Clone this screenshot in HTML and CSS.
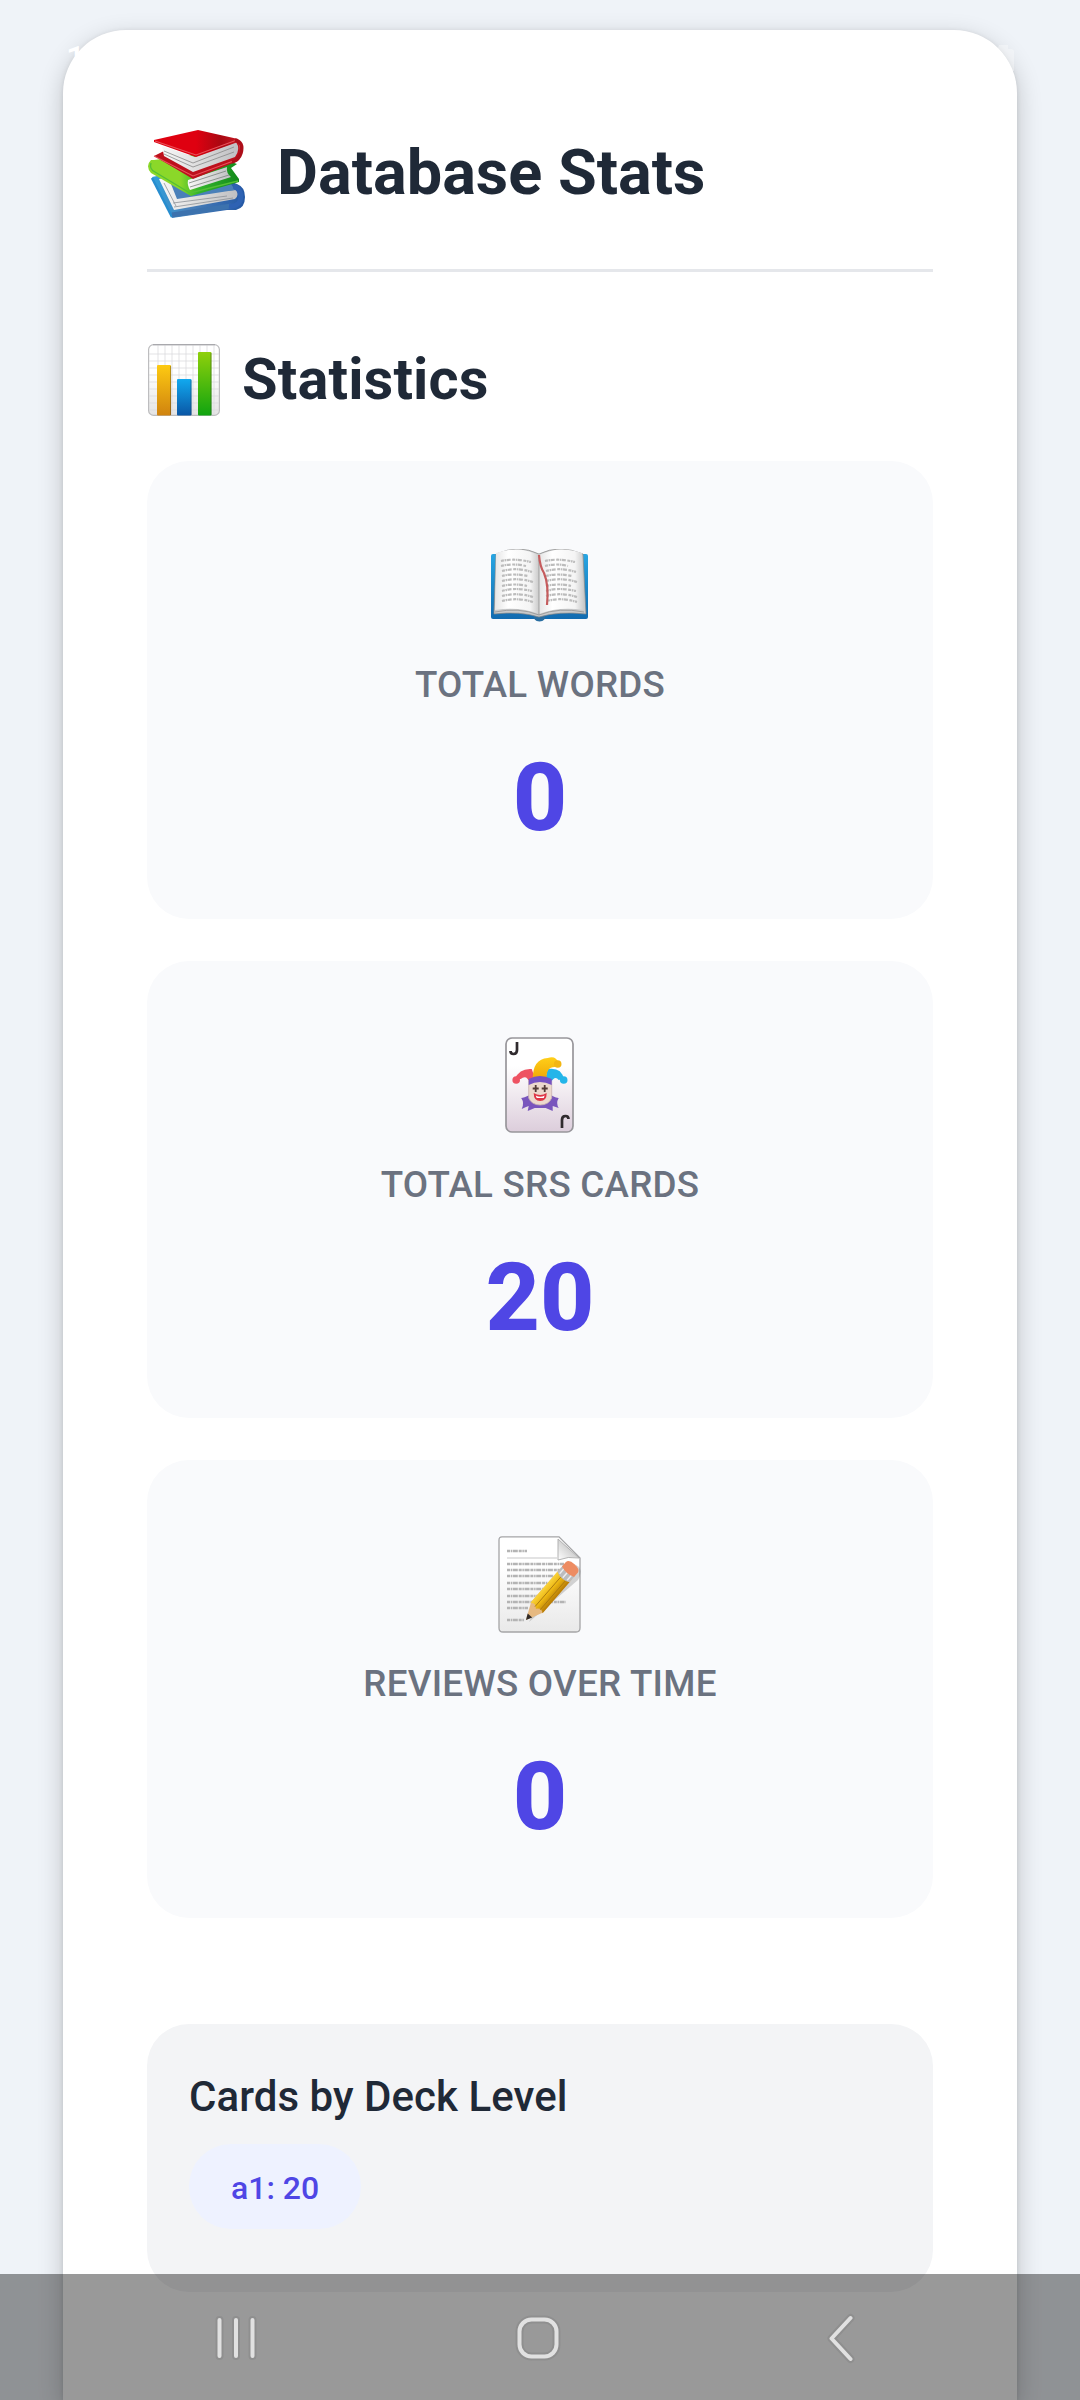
FILE: index.html
```html
<!DOCTYPE html>
<html lang="en">
<head>
<meta charset="utf-8">
<title>Database Stats</title>
<link rel="stylesheet" href="styles.css">
</head>
<body>
<main class="sheet">
  <header class="header">
    <svg class="icon-books" viewBox="0 0 99 88" aria-hidden="true">
      <defs>
        <linearGradient id="red" x1="0" x2="1"><stop offset=".5" stop-color="#df0010"/><stop offset=".8" stop-color="#a90812"/><stop offset="1" stop-color="#c61722"/></linearGradient>
        <linearGradient id="green" x1="0" x2="1"><stop offset=".35" stop-color="#8bd829"/><stop offset=".55" stop-color="#35b62c"/><stop offset="1" stop-color="#128a1b"/></linearGradient>
        <linearGradient id="blue" x1="0" x2="1"><stop offset="0" stop-color="#2fa0dc"/><stop offset=".4" stop-color="#4a80b9"/><stop offset="1" stop-color="#2458a5"/></linearGradient>
        <linearGradient id="pages" x1="0" x2="1"><stop offset="0" stop-color="#f8f8f8"/><stop offset=".5" stop-color="#dcdcdc"/><stop offset="1" stop-color="#bfbfc2"/></linearGradient>
      </defs>
      <path d="M5 47 50 38 90 54Q98 57 98 67 98 78 89 80L80 80 25 88Z" fill="url(#blue)"/>
      <path d="M12 49 30 46 42 64 89 60Q93 64 88 69L27 80Z" fill="url(#pages)"/>
      <path d="M22 49 30 69 88 60 84 54 55 47Z" fill="#4a80b9"/>
      <path d="M27 77 86 68M26 73 80 66M17 53 29 76" fill="none" stroke="#8c9097" stroke-width=".8"/>
      <path d="M5 48 25 87" fill="none" stroke="#278dcf" stroke-width="2.5"/>
      <path d="M25 85 84 76" fill="none" stroke="#3c72ae" stroke-width="5"/>
      <path d="M87 56Q96 61 93 71 90 77 82 76" fill="none" stroke="#2e62b3" stroke-width="5"/>
      <path d="M7 30 60 23 90 34 84 38 92 49V52L44 66 4 43Q-2 36 4 30Z" fill="url(#green)"/>
      <path d="M41 50 80 37Q79 43 84 47L43 60Q40 55 41 50Z" fill="url(#pages)"/>
      <path d="M42 53 79 41M43 57 82 45" stroke="#77807a" stroke-width=".8"/>
      <path d="M4 33Q2 39 8 42L43 63 91 51" fill="none" stroke="#54bf35" stroke-width="1.3"/>
      <path d="M7 26 19 20 48 30 91 10Q97 17 91 31L46 49Z" fill="#bd101c"/>
      <path d="M15 16 48 27 89 12Q94 19 88 27L46 42 17 26Z" fill="url(#pages)"/>
      <path d="M17 21 46 33 87 17M17 24 46 37 87 22" fill="none" stroke="#888" stroke-width=".8"/>
      <path d="M7 10 51 0 91 9 91 12 49 27 7 12Z" fill="url(#red)"/>
      <path d="M8 11 49 25 90 10M7 26 46 46 89 30Q96 24 92 13" fill="none" stroke="#e8535b" stroke-width="1.1"/>
      <path d="M88 10Q97 12 94 23 92 30 85 32" fill="none" stroke="#ad0e19" stroke-width="3.5"/>
    </svg>
    <h1 class="title">Database Stats</h1>
  </header>

  <div class="section-head">
    <svg class="icon-chart" viewBox="0 0 72 72" aria-hidden="true">
      <defs>
        <linearGradient id="paper" x1="0" y1="0" x2="0" y2="1"><stop offset=".4" stop-color="#fff"/><stop offset="1" stop-color="#e4e4e4"/></linearGradient>
        <linearGradient id="bar1" x1="0" y1="0" x2="0" y2="1"><stop stop-color="#fdca12"/><stop offset="1" stop-color="#d0830f"/></linearGradient>
        <linearGradient id="bar2" x1="0" y1="0" x2="0" y2="1"><stop stop-color="#11a9ef"/><stop offset="1" stop-color="#0a56a5"/></linearGradient>
        <linearGradient id="bar3" x1="0" y1="0" x2="0" y2="1"><stop stop-color="#8fd00b"/><stop offset="1" stop-color="#10a410"/></linearGradient>
      </defs>
      <rect x=".6" y=".6" width="70.8" height="70.8" rx="5" fill="url(#paper)" stroke="#bdbdbf" stroke-width="1.2"/>
      <path d="M10 1V71M17 1V71M24 1V71M31 1V71M38 1V71M45 1V71M52 1V71M59 1V71M66 1V71M1 10H71M1 17H71M1 24H71M1 31H71M1 38H71M1 45H71M1 52H71M1 59H71M1 66H71" stroke="#dcdcde" stroke-width=".8"/>
      <path d="M5 .7H67" stroke="#a9a9ad" stroke-width="1.2"/>
      <rect x="9" y="21" width="14" height="50.5" rx="1" fill="url(#bar1)"/>
      <rect x="29" y="35" width="14.5" height="36.5" rx="1" fill="url(#bar2)"/>
      <rect x="50" y="8" width="13.5" height="63.5" rx="1" fill="url(#bar3)"/>
      <path d="M22.6 22V71M43 36V71M63 9V71" stroke="#222" stroke-opacity=".35"/>
    </svg>
    <h2 class="section-title">Statistics</h2>
  </div>

  <section class="stats">
    <article class="stat">
      <div class="stat-icon">
        <svg width="97" height="73" viewBox="0 0 97 73" aria-hidden="true">
          <defs>
            <linearGradient id="cover" x1="0" y1="0" x2="0" y2="1"><stop stop-color="#27a5e2"/><stop offset="1" stop-color="#126bb0"/></linearGradient>
            <linearGradient id="leaf" x1="0" x2="1"><stop stop-color="#e5e5e5"/><stop offset=".3" stop-color="#fff"/><stop offset=".8" stop-color="#f4f4f4"/><stop offset="1" stop-color="#cacaca"/></linearGradient>
          </defs>
          <rect y="5" width="97" height="65" rx="2" fill="url(#cover)"/>
          <path d="M43 66H54Q55 72 48.5 72.5 42 72 43 66Z" fill="#286da1"/>
          <path d="M3 63 5 5Q28-5 48 5 68-5 92 5L95 65Q68 62 48 68 29 62 3 65Z" fill="#c8c9ca" stroke="#888" stroke-width=".7"/>
          <path d="M5 4Q28-4 48 6V65Q28 57 4 61Z" fill="url(#leaf)"/>
          <path d="M48 6Q68-4 91 4L93 61Q68 57 48 65Z" fill="url(#leaf)"/>
          <path d="M48 6V66M4 63Q28 58 48 66 68 58 93 63" fill="none" stroke="#999" stroke-width=".9"/>
          <g fill="none" stroke="#bcbcbc" stroke-width="2.2" stroke-dasharray="3 .7 1.5 .6 4 1.5">
            <path d="M10 12Q24 9 40 13M10 17Q22 14 35 17M11 22Q26 18 41 23M11 27Q22 24 37 27M11 32Q26 28 42 33M11 37Q24 34 36 37M11 42Q24 38 41 42M11 47Q26 43 42 48M11 52Q26 48 42 53"/>
            <path d="M54 12Q68 9 84 13M54 17Q66 14 77 17M55 22Q70 18 85 23M55 27Q66 24 81 27M55 32Q70 28 86 33M55 37Q68 34 80 37M55 42Q68 38 85 42M55 47Q70 43 86 48M56 52Q70 48 86 53"/>
          </g>
          <path d="M48 6Q49 18 53 24 58 36 56 56" fill="none" stroke="#c55c5d" stroke-width="2.2"/>
        </svg>
      </div>
      <div class="stat-label">TOTAL WORDS</div>
      <div class="stat-value">0</div>
    </article>

    <article class="stat">
      <div class="stat-icon">
        <svg width="69" height="96" viewBox="0 0 69 96" aria-hidden="true">
          <defs>
            <linearGradient id="card" x1="0" y1="0" x2="0" y2="1"><stop offset=".3" stop-color="#fff"/><stop offset="1" stop-color="#dccddb"/></linearGradient>
            <linearGradient id="gold" x1="0" y1="0" x2="0" y2="1"><stop stop-color="#ffcf19"/><stop offset="1" stop-color="#f0a806"/></linearGradient>
          </defs>
          <rect x="1" y="1" width="67" height="94" rx="6" fill="url(#card)" stroke="#98969b" stroke-width="1.7"/>
          <path d="M12 5V13Q12 17 8.5 17 5.5 17 5.5 14M57 91V83Q57 79 60.5 79 63.5 79 63.5 82" fill="none" stroke="#302b2e" stroke-width="2.7"/>
          <g transform="translate(.7 0)">
            <path d="M24 58Q18 61 15.5 61 19 66 16 72 20 70 23 69L22 74 29 71H40L47 74V69Q50 70 53 71 50 66 53 61 50 61 45 58Z" fill="#7955bd"/>
            <path d="M26 32Q14 31 9 42L15 42Q21 37 24 46H31Z" fill="#ee5262"/>
            <path d="M42 32Q56 30 58 42L53 43Q49 38 45 46L39 44Z" fill="#24b5e9"/>
            <path d="M27 42Q27 22 42 21 50 18 53 26L49 30Q40 30 41 42Z" fill="url(#gold)"/>
            <circle cx="10.5" cy="43" r="3.8" fill="#ee5262"/><circle cx="52" cy="27" r="3.8" fill="#f3b613"/><circle cx="58" cy="43" r="3.8" fill="#24b5e9"/>
            <path d="M23 44Q34 37 46 44V61Q43 68 34.5 68 26 68 23 61Z" fill="#ecd8cd" stroke="#c9b2b0" stroke-width=".8"/>
            <path d="M23 48V42Q34 36 46 42V48Q34 42 23 48Z" fill="#7652c2"/>
            <path d="M30 48V55M27 51.5H33M39 48V55M36 51.5H42" stroke="#523a36" stroke-width="1.8"/>
            <path d="M28 56Q34.5 60 41 56 41 64 34.5 64 28 64 28 56Z" fill="#df3545"/>
            <path d="M30 58.5Q34.5 61 39 58.5L38 61H31Z" fill="#fff"/>
          </g>
        </svg>
      </div>
      <div class="stat-label">TOTAL SRS CARDS</div>
      <div class="stat-value">20</div>
    </article>

    <article class="stat">
      <div class="stat-icon">
        <svg width="83" height="97" viewBox="0 0 83 97" aria-hidden="true">
          <defs>
            <linearGradient id="sheet" x1="0" y1="0" x2="0" y2="1"><stop offset=".3" stop-color="#fff"/><stop offset="1" stop-color="#e9e9e9"/></linearGradient>
            <linearGradient id="fold" x1="0" y1="1" x2="1" y2="0"><stop stop-color="#fff"/><stop offset="1" stop-color="#aaa"/></linearGradient>
            <linearGradient id="pencil" x1="0" y1="0" x2="1" y2="0"><stop stop-color="#f9d33c"/><stop offset=".45" stop-color="#edb712"/><stop offset="1" stop-color="#b67b05"/></linearGradient>
          </defs>
          <path d="M4 .8H61L82 22V92Q82 96 78 96H5Q1 96 1 92V4Q1 .8 4 .8Z" fill="url(#sheet)" stroke="#a5a5a7" stroke-width="1.3"/>
          <path d="M9 22H59" stroke="#c7c7c8"/>
          <g fill="none" stroke="#b4b4b4" stroke-width="2.6" stroke-dasharray="3 .7 1.5 .6 5 .9">
            <path d="M9 15H29M9 28H66M9 34H62M9 40H56M9 47H50M9 53H46M9 60H40M9 66H68M9 72H30M9 84H26"/>
          </g>
          <path d="M60 3 60 24Q70 20 81 22Z" fill="url(#fold)" stroke="#aaa" stroke-width=".9"/>
          <path d="M31 86 80 44Q86 33 78 29L35 78Z" fill="#333" opacity=".2"/>
          <g transform="translate(28 84) rotate(41)">
            <path d="M0 0-8-17V-61H8V-17Z" fill="#e6b981"/>
            <path d="M-8-16V-57H8V-16Q4-20 0-15-4-20-8-16Z" fill="url(#pencil)"/>
            <path d="M-2-16V-56M4-17V-56" stroke="#a97810" stroke-width=".9"/>
            <path d="M0 0-3-6H3Z" fill="#322b27"/>
            <path d="M-8-57V-66H8V-57Q0-53-8-57Z" fill="#bbbcbe"/>
            <path d="M-5-57V-65M0-56V-65M5-57V-65" stroke="#eee" stroke-width="1.4"/>
            <path d="M-8-64V-70Q-7-74 0-74 7-74 8-70V-64Q0-61-8-64Z" fill="#ed8c62"/>
          </g>
        </svg>
      </div>
      <div class="stat-label">REVIEWS OVER TIME</div>
      <div class="stat-value">0</div>
    </article>
  </section>

  <section class="decks">
    <h3 class="decks-title">Cards by Deck Level</h3>
    <span class="chip">a1: 20</span>
  </section>
</main>

<div class="status-bar"><span class="clock">1</span><svg class="battery" width="16" height="26" viewBox="0 0 16 26" aria-hidden="true"><path d="M1 0H10V4H13Q16 4 16 7V26H14Q11 13 0 3Z" fill="#fff" fill-opacity=".35"/></svg></div>

<nav class="nav-bar">
  <svg class="nav-icons" viewBox="0 0 1080 126" aria-hidden="true">
    <g fill="none" stroke-linecap="round" stroke-linejoin="round">
      <g stroke="#8f8f8f" stroke-width="8"><path d="M219.5 46V82M236 46V82M252.5 46V82M850.5 44 831.5 64.5 850.5 85"/><rect x="519.5" y="45.5" width="37" height="37" rx="12"/></g>
      <g stroke="#e1e1e1" stroke-width="4"><path d="M219.5 46V82M236 46V82M252.5 46V82M850.5 44 831.5 64.5 850.5 85"/><rect x="519.5" y="45.5" width="37" height="37" rx="12"/></g>
    </g>
  </svg>
</nav>
</body>
</html>
```
FILE: styles.css
```css
* { box-sizing: border-box; }

body {
  margin: 0;
  height: 2400px;
  padding: 30px 63px 0;
  overflow: hidden;
  background: #eff3f8;
  font-family: Roboto, sans-serif;
  color: #1f2937;
}

h1, h2, h3 { margin: 0; }
svg { display: block; flex: none; }

.sheet {
  height: 2370px;
  padding: 84px 84px 0;
  border-radius: 63px 63px 0 0;
  background: #fff;
  box-shadow: 0 8px 26px rgba(0, 0, 0, .2), 0 1px 5px rgba(0, 0, 0, .1);
}

.header {
  display: flex;
  align-items: center;
  gap: 31px;
  height: 158px;
  padding-bottom: 38px;
  border-bottom: 3px solid #e5e7eb;
}

.icon-books { width: 99px; height: 88px; margin-top: 3px; }
.title { font-size: 63px; font-weight: 700; line-height: 84px; }

.section-head {
  display: flex;
  align-items: center;
  gap: 22px;
  height: 80px;
  margin: 68px 0 41px 1px;
}

.icon-chart { width: 72px; height: 72px; }
.section-title { margin-bottom: 2px; font-size: 57.75px; font-weight: 700; line-height: 72px; letter-spacing: .15px; }

.stats { display: flex; flex-direction: column; gap: 42px; }

.stat {
  display: flex;
  flex-direction: column;
  align-items: center;
  height: 457.5px;
  padding-top: 74px;
  border-radius: 42px;
  background: #f9fafc;
}

.stat-icon { display: flex; align-items: center; height: 100px; padding-right: 2px; }

.stat-label {
  margin-top: 28px;
  font-size: 36.75px;
  font-weight: 550;
  line-height: 44px;
  letter-spacing: .25px;
  color: #6b7280;
}

.stat-value {
  margin-top: 35px;
  font-size: 94.5px;
  font-weight: 800;
  line-height: 112px;
  color: #4f46e5;
}

.decks {
  display: flex;
  flex-direction: column;
  align-items: flex-start;
  height: 268px;
  margin-top: 106px;
  padding: 43px 42px;
  border-radius: 42px;
  background: #f3f4f6;
}

.decks-title { font-size: 42px; font-weight: 550; line-height: 60px; letter-spacing: .05px; }

.chip {
  height: 85px;
  margin-top: 17px;
  padding: 0 42px;
  border-radius: 42px;
  background: #eef2ff;
  font-size: 32px;
  font-weight: 500;
  line-height: 88px;
  color: #4f46e5;
}

.status-bar {
  position: absolute;
  top: 40px;
  left: 66px;
  right: 66px;
  display: flex;
  justify-content: space-between;
  align-items: flex-start;
  color: #fff;
}

.clock { font-size: 34px; font-weight: 500; line-height: 36px; }
.battery { margin-top: 5px; }

.nav-bar {
  position: absolute;
  left: 0;
  right: 0;
  top: 2274px;
  height: 126px;
  background: rgba(0, 0, 0, .4);
}

.nav-icons { width: 1080px; height: 126px; }
```
